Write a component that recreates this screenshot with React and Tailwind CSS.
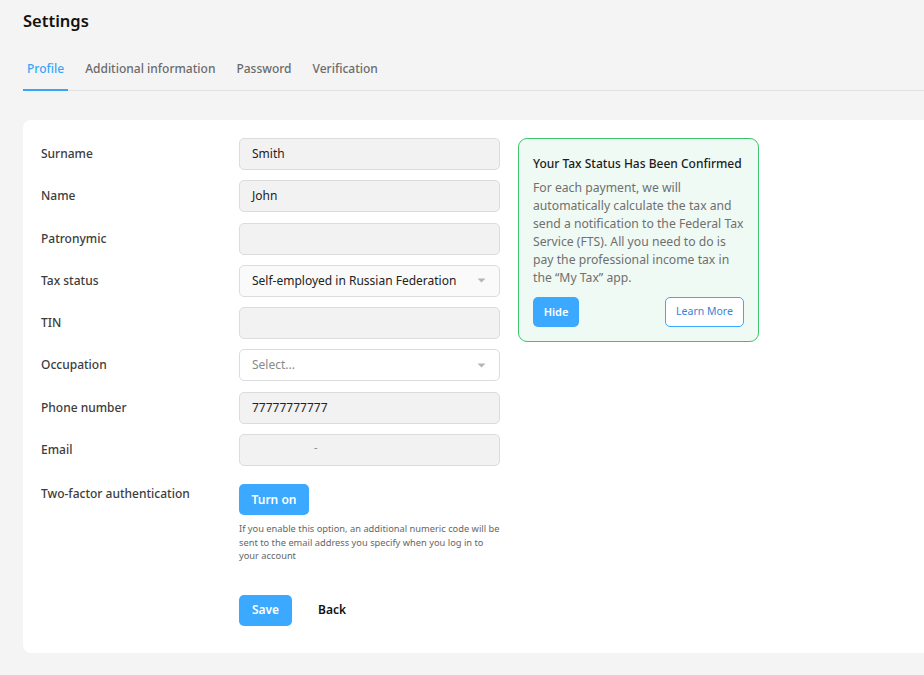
import React from "react";

const font = { fontFamily: '"Noto Sans", "Open Sans", sans-serif' };

function Caret() {
  return (
    <svg width="9" height="5" viewBox="0 0 9 5" className="shrink-0">
      <path d="M0.5 0.5 L8.5 0.5 L4.5 4.5 Z" fill="#b5b5b5" />
    </svg>
  );
}

function Row({ label, children }) {
  return (
    <div className="flex items-center">
      <div className="w-[198px] text-[12px] text-[#3c3c3c] font-medium">{label}</div>
      {children}
    </div>
  );
}

function Field({ value, children }) {
  return (
    <div className="w-[261px] h-[32px] rounded-[5px] border border-[#dcdcdc] bg-[#f2f2f2] flex items-center px-[12px] text-[12px] text-[#222]">
      {value}
      {children}
    </div>
  );
}

export default function App() {
  const rows = [
    ["Surname", <Field value="Smith" />],
    ["Name", <Field value="John" />],
    ["Patronymic", <Field />],
    [
      "Tax status",
      <div className="w-[261px] h-[32px] rounded-[5px] border border-[#dcdcdc] bg-[#fafafa] flex items-center justify-between pl-[12px] pr-[13px] text-[12px] text-[#222]">
        <span>Self-employed in Russian Federation</span>
        <Caret />
      </div>,
    ],
    ["TIN", <Field />],
    [
      "Occupation",
      <div className="w-[261px] h-[32px] rounded-[5px] border border-[#dcdcdc] bg-white flex items-center justify-between pl-[12px] pr-[13px] text-[12px] text-[#8a8a8a]">
        <span>Select...</span>
        <Caret />
      </div>,
    ],
    ["Phone number", <Field value="77777777777" />],
    [
      "Email",
      <Field>
        <span className="pl-[62px] text-[#888] text-[11px] -mt-[6px]">-</span>
      </Field>,
    ],
  ];

  return (
    <div className="min-h-[675px] bg-[#f4f4f4] pb-[23px]" style={font}>
      <div className="pl-[23px] pt-[9px]">
        <h1 className="text-[16.5px] font-semibold text-[#111] leading-[24px]">Settings</h1>
      </div>
      <div className="ml-[23px] mt-[27px] flex gap-[13px] border-b border-[#e2e2e2] text-[12px] font-medium">
        <div className="px-[4px] pb-[11px] text-[#3aa5f8] border-b-2 border-[#3aa5f8] -mb-px">Profile</div>
        <div className="px-[4px] pb-[11px] text-[#6b6b6b]">Additional information</div>
        <div className="px-[4px] pb-[11px] text-[#6b6b6b]">Password</div>
        <div className="px-[4px] pb-[11px] text-[#6b6b6b]">Verification</div>
      </div>

      <div className="ml-[23px] mt-[29px] bg-white rounded-l-[8px] pl-[18px] pt-[18px] pb-[27px] flex items-start gap-[18px]">
        <div className="flex flex-col">
          <div className="flex flex-col gap-[10.3px]">
            {rows.map(([l, c]) => (
              <Row key={l} label={l}>
                {c}
              </Row>
            ))}
          </div>
          <div className="flex mt-[18px]">
            <div className="w-[198px] text-[12px] text-[#3c3c3c] font-medium pt-[1px]">Two-factor authentication</div>
            <div className="w-[261px]">
              <button className="h-[31px] w-[70px] rounded-[5px] bg-[#3aa9ff] text-white text-[12px] font-semibold">
                Turn on
              </button>
              <p className="mt-[7px] text-[9.3px] leading-[13.5px] text-[#666]">
                If you enable this option, an additional numeric code will be sent to the email address you specify when you log in to your account
              </p>
            </div>
          </div>
          <div className="flex items-center mt-[32px] pl-[198px] gap-[26px]">
            <button className="h-[31px] w-[53px] rounded-[5px] bg-[#3aa9ff] text-white text-[12px] font-semibold">
              Save
            </button>
            <button className="text-[12px] font-semibold text-[#111]">Back</button>
          </div>
        </div>

        <div className="w-[241px] rounded-[9px] border border-[#3cc470] bg-[#f0faf4] pl-[14px] pr-[12px] pt-[15px] pb-[14px]">
          <div className="text-[12px] font-medium text-[#1c1c1c] leading-[20px] whitespace-nowrap">Your Tax Status Has Been Confirmed</div>
          <p className="mt-[5px] text-[12.2px] leading-[18px] text-[#6f6f6f]">
            For each payment, we will automatically calculate the tax and send a notification to the Federal Tax Service (FTS). All you need to do is pay the professional income tax in the “My Tax” app.
          </p>
          <div className="mt-[10px] flex justify-between pr-[2px]">
            <button className="h-[30px] w-[46px] rounded-[5px] bg-[#3aa9ff] text-white text-[11px] font-semibold">Hide</button>
            <button className="h-[30px] w-[79px] rounded-[5px] border border-[#3aa9ff] text-[#3c7fd6] text-[10.5px] bg-white">
              Learn More
            </button>
          </div>
        </div>
      </div>
    </div>
  );
}
